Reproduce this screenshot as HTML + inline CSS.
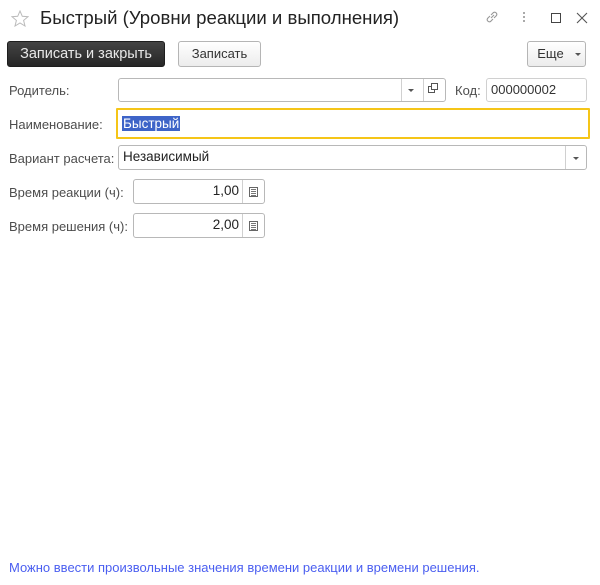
<!DOCTYPE html>
<html><head><meta charset="utf-8"><style>
*{box-sizing:border-box;margin:0;padding:0}
body{width:600px;height:585px;background:#fff;font-family:"Liberation Sans",Arial,sans-serif;font-size:13px;color:#4d4d4d;position:relative;overflow:hidden}
.a{position:absolute}
.lbl{position:absolute;color:#4d4d4d;font-size:13px;line-height:15px}
.fld{position:absolute;border:1px solid #b8b8b8;border-radius:3px;background:#fff;font-size:13px;color:#333;line-height:22px;padding-left:4px}
.btn{position:absolute;border:1px solid #b5b5b5;border-radius:3px;background:linear-gradient(#fff,#ececec);font-size:13px;color:#333;text-align:center;line-height:24px}
.sep{position:absolute;top:0;bottom:0;border-left:1px solid #d0d0d0}
.tri{position:absolute;width:0;height:0;border-left:3px solid transparent;border-right:3px solid transparent;border-top:3px solid #555}
.calc{position:absolute;left:115px;top:7px;width:9px;height:10px;border:1px solid #666;background:#fff}
.calc i{position:absolute;left:1px;right:1px;height:1px;background:#777}
</style></head><body>
<svg class="a" style="left:11px;top:10px" width="18" height="17" viewBox="0 0 18 17"><path d="M9 1 L11.3 6.3 L17 6.7 L12.6 10.4 L14 16 L9 13 L4 16 L5.4 10.4 L1 6.7 L6.7 6.3 Z" fill="none" stroke="#bbb" stroke-width="1"/></svg>
<div class="a" style="left:40px;top:7px;font-size:18.6px;color:#222;line-height:22px">Быстрый (Уровни реакции и выполнения)</div>
<svg class="a" style="left:484px;top:9px" width="16" height="16" viewBox="0 0 16 16"><g fill="none" stroke="#999" stroke-width="1.1"><path d="M7 9 L10 6"/><path d="M6 7 L3.5 9.5 a2.2 2.2 0 0 0 3 3 L9 10"/><path d="M7 6 L9.5 3.5 a2.2 2.2 0 0 1 3 3 L10 9"/></g></svg>
<div class="a" style="left:523px;top:12px;width:2px;height:2px;background:#aaa;box-shadow:0 4px #aaa,0 8px #aaa"></div>
<div class="a" style="left:551px;top:13px;width:10px;height:10px;border:1px solid #444"></div>
<svg class="a" style="left:576px;top:12px" width="12" height="12" viewBox="0 0 12 12"><path d="M1 1 L11 11 M11 1 L1 11" stroke="#555" stroke-width="1.1"/></svg>

<div class="btn" style="left:7px;top:41px;width:158px;height:26px;background:linear-gradient(#444,#262626);border-color:#1e1e1e;color:#e8e8e8;font-size:14.5px">Записать и закрыть</div>
<div class="btn" style="left:178px;top:41px;width:83px;height:26px">Записать</div>
<div class="btn" style="left:527px;top:41px;width:59px;height:26px;padding-right:12px">Еще<span class="tri" style="left:47px;top:11px"></span></div>

<div class="lbl" style="left:9px;top:83px">Родитель:</div>
<div class="fld" style="left:118px;top:78px;width:328px;height:24px"><span class="sep" style="left:282px"></span><span class="tri" style="left:289px;top:10px"></span><span class="sep" style="left:304px"></span><span class="a" style="left:309px;top:7px;width:7px;height:7px;border:1px solid #555"></span><span class="a" style="left:312px;top:4px;width:7px;height:7px;border:1px solid #555;background:#fff"></span></div>
<div class="lbl" style="left:455px;top:83px">Код:</div>
<div class="fld" style="left:486px;top:78px;width:101px;height:24px;border-color:#d0d0d0">000000002</div>

<div class="lbl" style="left:9px;top:117px">Наименование:</div>
<div class="a" style="left:116px;top:108px;width:474px;height:31px;border:2px solid #f5c518;border-radius:1px"><span class="a" style="left:4px;top:6px;background:#3e64c8;color:#fff;font-size:13.5px;line-height:15px;padding:0 1px">Быстрый</span></div>

<div class="lbl" style="left:9px;top:151px">Вариант расчета:</div>
<div class="fld" style="left:118px;top:145px;width:469px;height:25px;color:#222;font-size:13.5px">Независимый<span class="sep" style="left:446px"></span><span class="tri" style="left:454px;top:11px"></span></div>

<div class="lbl" style="left:9px;top:185px">Время реакции (ч):</div>
<div class="fld" style="left:133px;top:179px;width:132px;height:25px;font-size:13.5px;color:#222"><span class="a" style="right:25px;top:0">1,00</span><span class="sep" style="left:108px"></span><span class="calc"><i style="top:1px"></i><i style="top:3px"></i><i style="top:5px"></i><i style="top:7px"></i></span></div>
<div class="lbl" style="left:9px;top:219px">Время решения (ч):</div>
<div class="fld" style="left:133px;top:213px;width:132px;height:25px;font-size:13.5px;color:#222"><span class="a" style="right:25px;top:0">2,00</span><span class="sep" style="left:108px"></span><span class="calc"><i style="top:1px"></i><i style="top:3px"></i><i style="top:5px"></i><i style="top:7px"></i></span></div>

<div class="a" style="left:9px;top:560px;color:#4a5ef0;font-size:13px">Можно ввести произвольные значения времени реакции и времени решения.</div>
</body></html>
